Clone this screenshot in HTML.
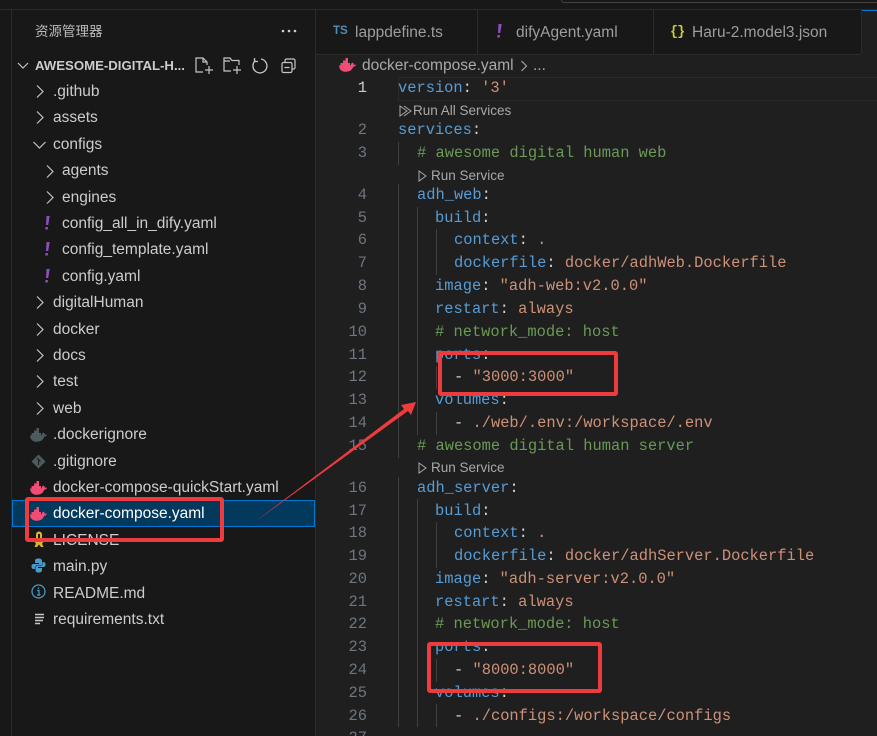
<!DOCTYPE html>
<html><head><meta charset="utf-8">
<style>
html,body{margin:0;padding:0;background:#181818}
#r{position:relative;width:877px;height:736px;overflow:hidden;background:#1f1f1f;font-family:"Liberation Sans","Noto Sans CJK SC",sans-serif}
.a{position:absolute}
.t{position:absolute;white-space:pre;font-size:15.5px;line-height:20px;color:#cccccc;margin-top:1px}
.c{position:absolute;left:0;white-space:pre;font:15.4px/20px "Liberation Mono",monospace;color:#d4d4d4}
.n{position:absolute;left:330px;width:37px;text-align:right;font:15.4px/20px "Liberation Mono",monospace;color:#6e7681}
.l{position:absolute;white-space:pre;font-size:13.5px;line-height:16px;color:#a8a8a8}
.g{position:absolute;width:1px;background:#404040}
i{font-style:normal}
.k{color:#569cd6}.s{color:#ce9178}.m{color:#6a9955}
svg{position:absolute;overflow:visible}
</style></head><body><div id="r">
<svg width="0" height="0" style="position:absolute"><defs>
<path id="w" d="M0 6.500h1.500V4H4V1.500h2.500V-1H9v5h2v2.500h.5c.3-1.500 1-2.500 2-3 .8.600 1.300 1.400 1.400 2.300.700-.300 1.300-.300 2.100 0-.5 1.300-1.500 1.900-2.800 2-1 3.200-3.600 5-7.300 5C2.500 12.800.3 10.500 0 6.500z"/>
</defs></svg>

<!-- sidebar -->
<div class="a" style="left:0;top:0;width:316px;height:736px;background:#181818"></div>
<div class="a" style="left:316px;top:0;width:561px;height:55px;background:#181818"></div>
<div class="a" style="left:0;top:9px;width:877px;height:1px;background:#2b2b2b"></div>
<div class="a" style="left:11px;top:9px;width:1px;height:727px;background:#2b2b2b"></div>
<div class="a" style="left:315px;top:9px;width:1px;height:727px;background:#2b2b2b"></div>
<div class="a" style="left:561px;top:0;width:316px;height:3px;border-bottom:1px solid #444;border-left:1px solid #444;border-radius:0 0 0 5px;box-sizing:border-box"></div>

<div class="t" style="left:35px;top:21px;font-size:13.500px;color:#bbbbbb">资源管理器</div>
<svg style="left:281px;top:29px" width="16" height="4"><circle cx="2" cy="2" r="1.300" fill="#ccc"/><circle cx="8" cy="2" r="1.300" fill="#ccc"/><circle cx="14" cy="2" r="1.300" fill="#ccc"/></svg>

<svg style="left:17px;top:61px" width="12" height="10" fill="none" stroke="#c5c5c5" stroke-width="1.200"><path d="M1 2l5 5 5-5"/></svg>
<div class="t" style="left:35px;top:55px;font-size:13.200px;font-weight:700;color:#cccccc">AWESOME-DIGITAL-H...</div>

<svg style="left:194px;top:56px" width="20" height="20" fill="none" stroke="#c5c5c5" stroke-width="1.200"><path d="M9 16H2V2h7l4 4v3M9 2v4h4M15 10v8M11 14h8"/></svg>
<svg style="left:222px;top:56px" width="20" height="20" fill="none" stroke="#c5c5c5" stroke-width="1.200"><path d="M9 15H2V2h6l2 2.500h7V9M2 5h6M15 10v8M11 14h8"/></svg>
<svg style="left:252px;top:57px" width="17" height="17" fill="none" stroke="#c5c5c5" stroke-width="1.300"><path d="M3.500 3.500A7 7 0 1 0 9 2M2.500 1v3.500H6"/></svg>
<svg style="left:281px;top:58px" width="16" height="15" fill="none" stroke="#c5c5c5" stroke-width="1.200"><rect x="1" y="4.500" width="10" height="10" rx="1.500"/><path d="M4 4V2.500A1.500 1.500 0 0 1 5.500 1h7A1.500 1.500 0 0 1 14 2.500v7a1.500 1.500 0 0 1-1.500 1.500H11M3.500 9.500h5"/></svg>

<!-- tree -->
<svg style="left:35px;top:85px" width="9" height="14" fill="none" stroke="#c5c5c5" stroke-width="1.200"><path d="M2 .5l6 6-6 6"/></svg>
<div class="t" style="left:53px;top:81px">.github</div>
<svg style="left:35px;top:111px" width="9" height="14" fill="none" stroke="#c5c5c5" stroke-width="1.200"><path d="M2 .5l6 6-6 6"/></svg>
<div class="t" style="left:53px;top:107px">assets</div>
<svg style="left:33px;top:141px" width="12" height="9" fill="none" stroke="#c5c5c5" stroke-width="1.200"><path d="M.5 1l6 6 6-6"/></svg>
<div class="t" style="left:53px;top:134px">configs</div>
<svg style="left:45px;top:165px" width="9" height="14" fill="none" stroke="#c5c5c5" stroke-width="1.200"><path d="M2 .5l6 6-6 6"/></svg>
<div class="t" style="left:62px;top:160px">agents</div>
<svg style="left:45px;top:191px" width="9" height="14" fill="none" stroke="#c5c5c5" stroke-width="1.200"><path d="M2 .5l6 6-6 6"/></svg>
<div class="t" style="left:62px;top:187px">engines</div>

<svg style="left:44px;top:215px" width="8" height="16" fill="#8c4fc0"><path d="M2.500 1h3.200L4.200 10H2zM1.500 12h2.500l-.3 2.500H1.200z"/></svg>
<div class="t" style="left:62px;top:213px">config_all_in_dify.yaml</div>
<svg style="left:44px;top:241px" width="8" height="16" fill="#8c4fc0"><path d="M2.500 1h3.200L4.200 10H2zM1.500 12h2.500l-.3 2.500H1.200z"/></svg>
<div class="t" style="left:62px;top:239px">config_template.yaml</div>
<svg style="left:44px;top:268px" width="8" height="16" fill="#8c4fc0"><path d="M2.500 1h3.200L4.200 10H2zM1.500 12h2.500l-.3 2.500H1.200z"/></svg>
<div class="t" style="left:62px;top:266px">config.yaml</div>

<svg style="left:35px;top:296px" width="9" height="14" fill="none" stroke="#c5c5c5" stroke-width="1.200"><path d="M2 .5l6 6-6 6"/></svg>
<div class="t" style="left:53px;top:292px">digitalHuman</div>
<svg style="left:35px;top:323px" width="9" height="14" fill="none" stroke="#c5c5c5" stroke-width="1.200"><path d="M2 .5l6 6-6 6"/></svg>
<div class="t" style="left:53px;top:319px">docker</div>
<svg style="left:35px;top:349px" width="9" height="14" fill="none" stroke="#c5c5c5" stroke-width="1.200"><path d="M2 .5l6 6-6 6"/></svg>
<div class="t" style="left:53px;top:345px">docs</div>
<svg style="left:35px;top:375px" width="9" height="14" fill="none" stroke="#c5c5c5" stroke-width="1.200"><path d="M2 .5l6 6-6 6"/></svg>
<div class="t" style="left:53px;top:371px">test</div>
<svg style="left:35px;top:402px" width="9" height="14" fill="none" stroke="#c5c5c5" stroke-width="1.200"><path d="M2 .5l6 6-6 6"/></svg>
<div class="t" style="left:53px;top:398px">web</div>

<svg style="left:30px;top:429px" width="17" height="13" fill="#4d5a5e"><use href="#w"/></svg>
<div class="t" style="left:53px;top:424px">.dockerignore</div>
<svg style="left:31px;top:454px" width="15" height="15" fill="#4d5a5e"><path d="M7.500 0.500l7 7-7 7-7-7z"/><path d="M6 4l3.500 3.500M7.500 6v5" stroke="#181818" stroke-width="1" fill="none"/></svg>
<div class="t" style="left:53px;top:451px">.gitignore</div>
<svg style="left:30px;top:482px" width="17" height="13" fill="#f14c74"><use href="#w"/></svg>
<div class="t" style="left:53px;top:477px">docker-compose-quickStart.yaml</div>

<div class="a" style="left:12px;top:500px;width:303px;height:27px;box-sizing:border-box;background:#04395e;border:1px solid #0078d4"></div>
<svg style="left:30px;top:508px" width="17" height="13" fill="#f14c74"><use href="#w"/></svg>
<div class="t" style="left:53px;top:503px;color:#fff">docker-compose.yaml</div>

<svg style="left:33px;top:531px" width="12" height="17" fill="#d7b72c"><path d="M3 7V3.500a3 3 0 0 1 6 0V7h1.500v4L9 12.500 10.500 16H8L6 13.500 4 16H1.500L3 12.500 1.500 11V7z"/><rect x="5" y="3" width="2" height="4" fill="#181818"/></svg>
<div class="t" style="left:53px;top:530px">LICENSE</div>
<svg style="left:31px;top:558px" width="15" height="15" fill="#4d9ac9"><path d="M7.500.5c-3 0-3.500 1.200-3.500 2.500V5h4v1H2.500C1 6 .5 7.200.5 8.500S1.200 11 2.500 11H4V9.500C4 8.200 5 7.500 6 7.500h3.500c1 0 1.500-.7 1.500-1.500V3C11 1.500 10 .5 7.500.5z"/><path d="M7.500 14.500c3 0 3.500-1.200 3.500-2.500v-2H7V9h5.500c1.500 0 2-1.200 2-2.500S13.800 4 12.500 4H11.500v1.500c0 1.300-1 2.500-2 2.500H6C5 8 4.500 8.700 4.500 9.500V12c0 1.500 1 2.500 3 2.500z"/></svg>
<div class="t" style="left:53px;top:556px">main.py</div>
<svg style="left:31px;top:584px" width="15" height="15" fill="none" stroke="#4d9ac9" stroke-width="1.200"><circle cx="7.500" cy="7.500" r="6.500"/><path d="M6 6.500h2v4.500M6 11h3.500M7.500 3.500v1.500"/></svg>
<div class="t" style="left:53px;top:583px">README.md</div>
<svg style="left:34px;top:613px" width="11" height="12" stroke="#c5c5c5" stroke-width="1.500"><path d="M1 1.500h9M1 4.500h9M1 7.500h8M1 10.500h5"/></svg>
<div class="t" style="left:53px;top:609px">requirements.txt</div>

<!-- tabs -->
<div class="a" style="left:477px;top:10px;width:1px;height:44px;background:#2b2b2b"></div>
<div class="a" style="left:653px;top:10px;width:1px;height:44px;background:#2b2b2b"></div>
<div class="a" style="left:861px;top:10px;width:1px;height:44px;background:#2b2b2b"></div>
<div class="a" style="left:316px;top:54px;width:545px;height:1px;background:#2b2b2b"></div>
<div class="a" style="left:862px;top:10px;width:15px;height:45px;background:#1f1f1f"></div>
<div class="a" style="left:862px;top:10px;width:15px;height:1px;background:#0078d4"></div>

<div class="t" style="left:333px;top:23px;font-size:11.500px;line-height:14px;font-weight:700;color:#4d8fb8">TS</div>
<div class="t" style="left:355px;top:22px;color:#9d9d9d">lappdefine.ts</div>
<svg style="left:496px;top:23px" width="8" height="16" fill="#8c4fc0"><path d="M2.500 1h3.200L4.200 10H2zM1.500 12h2.500l-.3 2.500H1.200z"/></svg>
<div class="t" style="left:516px;top:22px;color:#9d9d9d">difyAgent.yaml</div>
<div class="t" style="left:670px;top:22px;font:700 13.500px/20px 'Liberation Mono',monospace;letter-spacing:-1px;color:#cbcb41">{}</div>
<div class="t" style="left:692px;top:22px;color:#9d9d9d">Haru-2.model3.json</div>

<!-- breadcrumb -->
<svg style="left:339px;top:59px" width="17" height="13" fill="#f14c74"><use href="#w"/></svg>
<div class="t" style="left:362px;top:55px;color:#a9a9a9">docker-compose.yaml</div>
<svg style="left:520px;top:60px" width="8" height="12" fill="none" stroke="#a9a9a9" stroke-width="1.100"><path d="M1.500 1l5 5-5 5"/></svg>
<div class="t" style="left:533px;top:55px;color:#a9a9a9">...</div>

<!-- current line -->
<div class="a" style="left:398px;top:77px;width:479px;height:24px;box-sizing:border-box;border:1px solid #2b2b2b;border-right:0"></div>

<!-- guides -->
<div class="g" style="left:398px;top:142px;height:23px"></div>
<div class="g" style="left:398px;top:184px;height:274px"></div>
<div class="g" style="left:398px;top:477px;height:250px"></div>
<div class="g" style="left:417px;top:207px;height:228px"></div>
<div class="g" style="left:417px;top:499px;height:228px"></div>
<div class="g" style="left:436px;top:229px;height:46px"></div>
<div class="g" style="left:436px;top:366px;height:23px"></div>
<div class="g" style="left:436px;top:412px;height:23px"></div>
<div class="g" style="left:436px;top:522px;height:46px"></div>
<div class="g" style="left:436px;top:659px;height:23px"></div>
<div class="g" style="left:436px;top:704px;height:23px"></div>

<!-- line numbers -->
<div class="n" style="top:78px;color:#cccccc">1</div>
<div class="n" style="top:120px">2</div>
<div class="n" style="top:143px">3</div>
<div class="n" style="top:185px">4</div>
<div class="n" style="top:208px">5</div>
<div class="n" style="top:230px">6</div>
<div class="n" style="top:253px">7</div>
<div class="n" style="top:276px">8</div>
<div class="n" style="top:299px">9</div>
<div class="n" style="top:322px">10</div>
<div class="n" style="top:345px">11</div>
<div class="n" style="top:367px">12</div>
<div class="n" style="top:390px">13</div>
<div class="n" style="top:413px">14</div>
<div class="n" style="top:436px">15</div>
<div class="n" style="top:478px">16</div>
<div class="n" style="top:501px">17</div>
<div class="n" style="top:523px">18</div>
<div class="n" style="top:546px">19</div>
<div class="n" style="top:569px">20</div>
<div class="n" style="top:592px">21</div>
<div class="n" style="top:614px">22</div>
<div class="n" style="top:637px">23</div>
<div class="n" style="top:660px">24</div>
<div class="n" style="top:683px">25</div>
<div class="n" style="top:706px">26</div>
<div class="n" style="top:728px">27</div>

<!-- code -->
<div class="c" style="left:398px;top:78px"><i class="k">version</i>: <i class="s">'3'</i></div>
<svg style="left:399px;top:105px" width="13" height="13" fill="none" stroke="#a8a8a8" stroke-width="1"><path d="M1 1l7 5-7 5zM5 1l7 5-7 5"/></svg>
<div class="l" style="left:413px;top:103px">Run All Services</div>
<div class="c" style="left:398px;top:120px"><i class="k">services</i>:</div>
<div class="c" style="left:417px;top:143px"><i class="m"># awesome digital human web</i></div>
<svg style="left:418px;top:170px" width="10" height="12" fill="none" stroke="#a8a8a8" stroke-width="1"><path d="M1 1l7 5-7 5z"/></svg>
<div class="l" style="left:431px;top:168px">Run Service</div>
<div class="c" style="left:417px;top:185px"><i class="k">adh_web</i>:</div>
<div class="c" style="left:435px;top:208px"><i class="k">build</i>:</div>
<div class="c" style="left:454px;top:230px"><i class="k">context</i>: <i class="s">.</i></div>
<div class="c" style="left:454px;top:253px"><i class="k">dockerfile</i>: <i class="s">docker/adhWeb.Dockerfile</i></div>
<div class="c" style="left:435px;top:276px"><i class="k">image</i>: <i class="s">"adh-web:v2.0.0"</i></div>
<div class="c" style="left:435px;top:299px"><i class="k">restart</i>: <i class="s">always</i></div>
<div class="c" style="left:435px;top:322px"><i class="m"># network_mode: host</i></div>
<div class="c" style="left:435px;top:345px"><i class="k">ports</i>:</div>
<div class="c" style="left:454px;top:367px">- <i class="s">"3000:3000"</i></div>
<div class="c" style="left:435px;top:390px"><i class="k">volumes</i>:</div>
<div class="c" style="left:454px;top:413px">- <i class="s">./web/.env:/workspace/.env</i></div>
<div class="c" style="left:417px;top:436px"><i class="m"># awesome digital human server</i></div>
<svg style="left:418px;top:462px" width="10" height="12" fill="none" stroke="#a8a8a8" stroke-width="1"><path d="M1 1l7 5-7 5z"/></svg>
<div class="l" style="left:431px;top:460px">Run Service</div>
<div class="c" style="left:417px;top:478px"><i class="k">adh_server</i>:</div>
<div class="c" style="left:435px;top:501px"><i class="k">build</i>:</div>
<div class="c" style="left:454px;top:523px"><i class="k">context</i>: <i class="s">.</i></div>
<div class="c" style="left:454px;top:546px"><i class="k">dockerfile</i>: <i class="s">docker/adhServer.Dockerfile</i></div>
<div class="c" style="left:435px;top:569px"><i class="k">image</i>: <i class="s">"adh-server:v2.0.0"</i></div>
<div class="c" style="left:435px;top:592px"><i class="k">restart</i>: <i class="s">always</i></div>
<div class="c" style="left:435px;top:614px"><i class="m"># network_mode: host</i></div>
<div class="c" style="left:435px;top:637px"><i class="k">ports</i>:</div>
<div class="c" style="left:454px;top:660px">- <i class="s">"8000:8000"</i></div>
<div class="c" style="left:435px;top:683px"><i class="k">volumes</i>:</div>
<div class="c" style="left:454px;top:706px">- <i class="s">./configs:/workspace/configs</i></div>

<!-- annotations -->
<div class="a" style="left:25px;top:497px;width:199px;height:45px;box-sizing:border-box;border:4px solid #ee3b3e;border-radius:3px"></div>
<div class="a" style="left:438px;top:351px;width:180px;height:45px;box-sizing:border-box;border:4px solid #ee3b3e;border-radius:3px"></div>
<div class="a" style="left:427px;top:642px;width:175px;height:51px;box-sizing:border-box;border:4px solid #ee3b3e;border-radius:3px"></div>
<svg style="left:0;top:0" width="877" height="736"><path d="M252 524L404 409 401 405 416 402 411 415 408 411z" fill="#ee3b3e"/></svg>
</div></body></html>
